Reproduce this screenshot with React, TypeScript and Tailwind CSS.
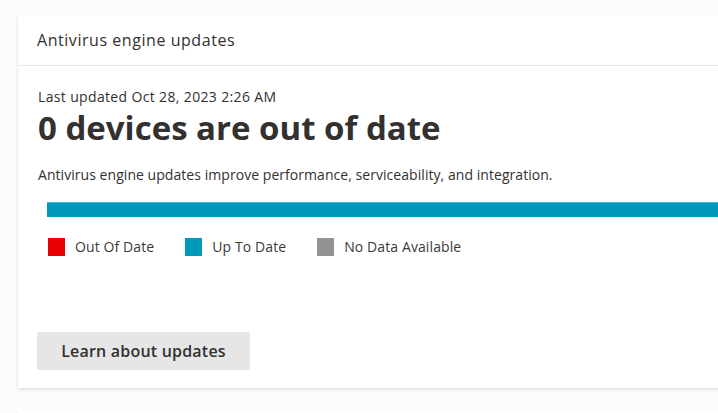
import React from "react";

const legend = [
  { label: "Out Of Date", color: "bg-[#e60000]" },
  { label: "Up To Date", color: "bg-[#0099bc]" },
  { label: "No Data Available", color: "bg-[#939393]" },
];

export default function App() {
  return (
    <div
      className="w-[718px] h-[413px] overflow-hidden bg-[#fcfcfc] pl-[18px] pt-[14px] text-[#323130]"
      style={{ fontFamily: '"Open Sans", "Noto Sans", sans-serif' }}
    >
      {/* Card */}
      <div className="w-[720px] h-[374px] bg-white shadow-[0_1.6px_3.6px_rgba(0,0,0,0.13),0_0.3px_0.9px_rgba(0,0,0,0.11)] flex flex-col">
        <div className="h-[52px] flex items-center px-[19px] border-b border-[#e8e8e8]">
          <h2 className="text-[16px] font-normal tracking-[0.55px]">Antivirus engine updates</h2>
        </div>

        <div className="flex flex-col pl-[20px] pt-[22px] flex-1">
          <div className="text-[14px] font-medium leading-[18px] tracking-[0.35px]">
            Last updated Oct 28, 2023 2:26 AM
          </div>
          <div className="text-[33px] font-bold leading-[44px]">
            0 devices are out of date
          </div>
          <p className="mt-[15px] text-[14px] leading-[20px] tracking-[0.05px]">
            Antivirus engine updates improve performance, serviceability, and integration.
          </p>

          <div className="mt-[17px] ml-[9px] h-[15px] bg-[#0099bc] border-t border-[#4fb3cc]" />

          <div className="mt-[21px] ml-[10px] flex items-center h-[18px]">
            {legend.map((l) => (
              <div key={l.label} className="flex items-center mr-[31px]">
                <span className={`w-[17px] h-[18px] ${l.color}`} />
                <span className="ml-[10px] text-[14px] leading-[18px] tracking-[0.1px] text-[#3b3a39]">{l.label}</span>
              </div>
            ))}
          </div>

          <div className="mt-auto mb-[18px]">
            <button className="-ml-[1px] w-[213px] h-[38px] rounded-[2px] bg-[#e6e6e6] text-[16px] font-semibold tracking-[0.2px] text-[#323130]">
              Learn about updates
            </button>
          </div>
        </div>
      </div>
      <div className="mt-[23px] w-[720px] h-[40px] bg-white shadow-[0_1.6px_3.6px_rgba(0,0,0,0.13),0_0.3px_0.9px_rgba(0,0,0,0.11)]" />
    </div>
  );
}
